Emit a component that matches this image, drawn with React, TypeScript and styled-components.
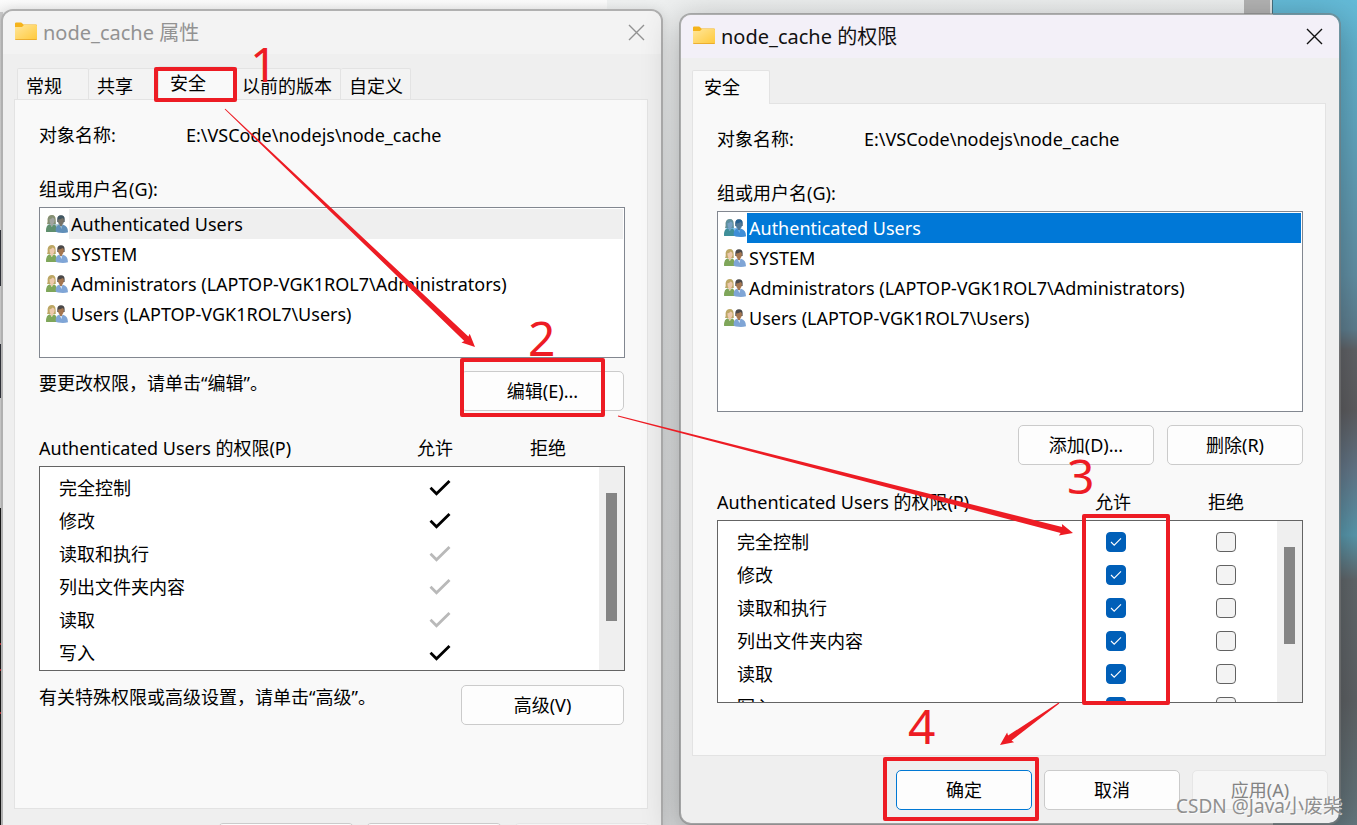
import React from "react";
import styled, { createGlobalStyle, css } from "styled-components";

const GlobalStyle = createGlobalStyle`
  * { box-sizing: border-box; }
  body {
    margin: 0;
    font-family: "Noto Sans", "Noto Sans CJK SC", sans-serif;
    font-size: 18px;
    line-height: 24px;
    color: #000;
  }
  button, input { font: inherit; color: inherit; margin: 0; }
`;

const Desktop = styled.main`
  position: relative;
  display: flex;
  align-items: flex-start;
  gap: 16px;
  height: 100vh;
  overflow: hidden;
  padding: 9px 16px 0 1px;
  background:
    linear-gradient(#fbfbfb, #f3f3f3) 0 0 / 607px 12px no-repeat,
    linear-gradient(to right, transparent 1244px, #b4b4b4 1244px, #b4b4b4 1270px, #e4e6e6 1270px, #e4e6e6 1272px, #46707f 1272px, #46707f 1273px, transparent 1273px) 0 0 / 100% 14px no-repeat,
    linear-gradient(#64bbd8 0, #62aac4 120px, #6291a6 275px, #5f7f90 330px, #626468 350px, #5e5e61 410px, #64788a 470px, #5a9bb0 535px, #62686c 580px, #5f6366 700px, #65787f 825px) 100% 0 / 84px 100% no-repeat,
    linear-gradient(#c9c9c9 0, #d8d8d8 230px, #30323a 230px, #30323a 286px, #cfcfcf 286px, #cfcfcf 344px, #30323a 344px, #30323a 398px, #cfcfcf 398px, #cfcfcf 508px, #181818 508px, #181818 643px, #b02a30 643px, #b02a30 645px, #181818 645px, #181818 669px, #b02a30 669px, #b02a30 671px, #181818 671px, #181818 712px, #b02a30 712px, #b02a30 714px, #181818 714px) 0 0 / 3px 100% no-repeat,
    linear-gradient(#eef0f0, #e0e2e3 250px, #d6d8d9);
`;

const Window = styled.section<{ $active?: boolean }>`
  position: relative;
  z-index: ${(p) => (p.$active ? 1 : 0)};
  flex: 1;
  min-width: 0;
  margin-top: ${(p) => (p.$active ? "4px" : "0")};
  border: 2px solid ${(p) => (p.$active ? "rgba(120, 120, 120, 0.55)" : "#b0b0b0")};
  border-radius: 12px;
  background: #efefef;
  background-clip: padding-box;
  box-shadow: ${(p) => (p.$active ? "0 8px 36px rgba(0, 0, 0, 0.3)" : "0 0 12px rgba(0, 0, 0, 0.12)")};
`;

const TitleBar = styled.header<{ $active?: boolean }>`
  display: flex;
  align-items: center;
  height: 43px;
  padding: 0 12px;
  border-radius: 10px 10px 0 0;
  background: ${(p) => (p.$active ? "#f3f0f8" : "#f3f3f3")};
  color: ${(p) => (p.$active ? "#111" : "#929292")};
`;

const Title = styled.h1`
  flex: 1;
  margin: 0 0 0 5px;
  font-size: 20px;
  font-weight: 400;
  line-height: 24px;
`;

const CloseButton = styled.button`
  display: flex;
  padding: 4px;
  border: 0;
  background: none;
`;

const TabList = styled.div<{ $single?: boolean }>`
  display: flex;
  align-items: flex-end;
  height: 45px;
  padding-left: ${(p) => (p.$single ? "11px" : "14px")};
`;

const selectedTab = css`
  position: relative;
  z-index: 1;
  height: 34px;
  margin-bottom: -1px;
  padding: 0 0 2px 11px;
  border-bottom: 0;
  background: #f9f9f9;
`;

const Tab = styled.button<{ $selected?: boolean; $width: number }>`
  width: ${(p) => p.$width}px;
  height: 31px;
  padding: 4px 0 0 8px;
  border: 1px solid #e3e3e3;
  border-bottom: 0;
  border-left-width: ${(p) => (p.$selected ? 1 : 0)}px;
  border-radius: 2px 2px 0 0;
  background: #f3f3f3;
  text-align: left;
  white-space: nowrap;
  &:first-child { border-left-width: 1px; }
  ${(p) => p.$selected && selectedTab}
`;

const Panel = styled.div<{ $height: number }>`
  display: flex;
  flex-direction: column;
  min-height: ${(p) => p.$height}px;
  margin: 0 13px 0 11px;
  padding: 23px 22px 0 24px;
  border: 1px solid #e3e3e3;
  background: #f9f9f9;
`;

const ObjectRow = styled.dl`
  display: grid;
  grid-template-columns: 147px 1fr;
  margin: 0 0 30px;
  dt, dd { margin: 0; }
`;

const Label = styled.div`
  margin-bottom: 6px;
`;

const UserList = styled.ul<{ $height: number }>`
  height: ${(p) => p.$height}px;
  margin: 0;
  padding: 1px;
  border: 1px solid #828790;
  background: #fff;
  list-style: none;
`;

const UserRow = styled.li`
  display: flex;
  align-items: center;
  height: 30px;
  padding-left: 5px;
`;

const UserName = styled.span<{ $tone?: "blue" | "grey" }>`
  flex: 1;
  margin-left: 1px;
  padding: 3px 2px;
  color: ${(p) => (p.$tone === "blue" ? "#fff" : "#000")};
  background: ${(p) => (p.$tone === "blue" ? "#0078d7" : p.$tone === "grey" ? "#efefef" : "transparent")};
`;

const ActionRow = styled.div`
  display: flex;
  justify-content: space-between;
  align-items: flex-start;
  padding: 13px 1px 0 0;
`;

const ButtonPair = styled.div`
  display: flex;
  justify-content: flex-end;
  gap: 13px;
  padding-top: 13px;
`;

const Button = styled.button<{ $wide?: boolean; $default?: boolean }>`
  width: ${(p) => (p.$wide ? 163 : 136)}px;
  height: 40px;
  padding: 0;
  border: 1px solid ${(p) => (p.$default ? "#0078d4" : "#cbcbcb")};
  border-radius: 5px;
  background: #fdfdfd;
  &:disabled {
    border-color: #e6e6e6;
    background: #f6f6f6;
    color: #838383;
  }
`;

const PermissionHeader = styled.div`
  display: grid;
  grid-template-columns: 1fr 108px 118px;
  padding: 25px 18px 6px 0;
  white-space: nowrap;
  span + span { text-align: center; }
`;

const PermissionBox = styled.div<{ $height: number }>`
  display: flex;
  height: ${(p) => p.$height}px;
  margin-bottom: 1px;
  overflow: hidden;
  border: 1px solid #646464;
  background: #fff;
`;

const PermissionTable = styled.table`
  flex: 1;
  height: max-content;
  margin-top: 4px;
  border-collapse: collapse;
  table-layout: fixed;
  th { padding: 0 0 0 19px; font-weight: 400; text-align: left; }
  td { padding: 0; text-align: center; }
  td:nth-child(2) { width: 116px; }
  td:nth-child(3) { width: 102px; }
  tr { height: 33px; }
  svg, input { display: block; margin: 0 auto; }
`;

const ScrollTrack = styled.div`
  width: 25px;
  padding: 26px 7px 0;
  background: #efefef;
`;

const ScrollThumb = styled.div<{ $height: number }>`
  height: ${(p) => p.$height}px;
  background: #858585;
`;

const CheckBox = styled.input`
  appearance: none;
  width: 20px;
  height: 20px;
  border: 1px solid #626262;
  border-radius: 4px;
  background: #f3f3f3;
  &:checked {
    border-color: #005fb8;
    background: #005fb8;
  }
`;

const CheckCell = styled.label`
  display: grid;
  justify-content: center;
  padding-right: 2px;
  > * { grid-area: 1 / 1; }
  svg { align-self: center; z-index: 1; pointer-events: none; }
`;

const Footer = styled.footer`
  display: flex;
  justify-content: flex-end;
  gap: 12px;
  padding: 14px 11px 13px;
`;

const Annotations = styled.svg`
  position: absolute;
  z-index: 2;
  top: 0;
  left: 0;
  width: 100%;
  pointer-events: none;
  fill: #ed1c24;
  font-size: 48px;
`;

const Watermark = styled.span`
  position: absolute;
  z-index: 3;
  right: 15px;
  bottom: 7px;
  font-size: 19px;
  color: #8f8f8f;
  text-shadow: 1px 1px 0 rgba(255, 255, 255, 0.7);
`;

const FolderIcon = () => (
  <svg width="23" height="22" viewBox="0 0 23 22" aria-hidden="true">
    <defs>
      <linearGradient id="folder" x1="0" y1="0" x2="1" y2="1">
        <stop offset="0" stopColor="#ffe69a" />
        <stop offset="1" stopColor="#ffc93a" />
      </linearGradient>
    </defs>
    <path d="M0 1.500Q0 .5 1.200 .5H6.200L8.500 2.500H21Q22 2.500 22 3.500V8H0Z" fill="#f5b31b" />
    <path d="M0 5H7L9 3.100H21Q22 3.100 22 4.100V17Q22 18 21 18H1Q0 18 0 17Z" fill="url(#folder)" />
    <path d="M0 17.200H22Q22 18 21 18H1Q0 18 0 17.200Z" fill="#e6a324" />
  </svg>
);

const CloseIcon = () => (
  <svg width="17" height="17" viewBox="0 0 17 17" fill="none" stroke="currentColor" strokeWidth="1.4" aria-hidden="true">
    <path d="M1 1 16 16M16 1 1 16" />
  </svg>
);

const UsersIcon = ({ tint }: { tint?: string }) => (
  <svg width="22" height="18" viewBox="0 0 22 18" aria-hidden="true">
    <path d="M1 9Q2 8 1.600 4Q2.200 0 6 0Q9.500 0 9.600 4.500L9.800 9Z" fill="#bda765" />
    <path d="M3.500 4Q5 4.600 6.500 2.500Q9 3 8.600 6Q8 8.600 7 9V11H4.500V9Q3.300 7.500 3.500 4Z" fill="#ecc9ad" />
    <path d="M0 16.500Q0 9.800 4 9.200L5.800 12L7.800 9.200Q11 10 11 17H1Q0 17 0 16.500Z" fill="#7fa65a" />
    <path d="M11.300 4Q11.300 0.300 15 0.200Q18.700 0.300 18.600 4V7H11.300Z" fill="#4a4848" />
    <path d="M12 4.400Q15 4.600 16.500 3Q18 3.400 18 5.500Q17.600 8.400 16.400 9.200V11H13.400V9.200Q12 8 12 4.400Z" fill="#a47650" />
    <path d="M9.600 16Q9.600 10.600 13 9.800L15 12L17 9.800Q22 11 22 17.200Q18 18.600 12 17.500Q9.600 17 9.600 16Z" fill="#7fa5d6" />
    <path d="M13.700 10.400 15 12 16.300 10.400 15.500 14Z" fill="#dfeaf6" />
    {tint && (
      <path
        d="M0 16.500Q0 10 3 9.300H1Q2 8 1.600 4Q2.200 0 6 0Q9.500 0 9.600 4.500L10 9.300 12.500 9Q11.300 7.500 11.300 4Q11.300.3 15 .2Q18.700.3 18.600 4Q18.500 8 17 9.800Q22 11 22 17.200Q18 18.600 12 17.500L11 17H1Q0 17 0 16.500Z"
        fill={tint}
      />
    )}
  </svg>
);

const GrantedIcon = ({ inherited }: { inherited?: boolean }) => (
  <svg width="24" height="18" viewBox="0 0 24 18" fill="none" stroke={inherited ? "#b9b9b9" : "#000"} strokeWidth="2.8" role="img" aria-label="允许">
    <path d="M3.500 8.800 9.500 14.800 22.500 2" />
  </svg>
);

const TickIcon = () => (
  <svg width="12" height="10" viewBox="0 0 12 10" fill="none" stroke="#fff" strokeWidth="1.100" aria-hidden="true">
    <path d="M1 5 4.200 8.200 11 1.400" />
  </svg>
);

const users = [
  "Authenticated Users",
  "SYSTEM",
  "Administrators (LAPTOP-VGK1ROL7\\Administrators)",
  "Users (LAPTOP-VGK1ROL7\\Users)",
];

const permissions = [
  { name: "完全控制", inherited: false },
  { name: "修改", inherited: false },
  { name: "读取和执行", inherited: true },
  { name: "列出文件夹内容", inherited: true },
  { name: "读取", inherited: true },
  { name: "写入", inherited: false },
];

const WindowTitle = ({ text, active }: { text: string; active?: boolean }) => (
  <TitleBar $active={active}>
    <FolderIcon />
    <Title>{text}</Title>
    <CloseButton type="button" aria-label="关闭">
      <CloseIcon />
    </CloseButton>
  </TitleBar>
);

const ObjectAndUsers = ({ height, tone }: { height: number; tone: "blue" | "grey" }) => (
  <>
    <ObjectRow>
      <dt>对象名称:</dt>
      <dd>E:\VSCode\nodejs\node_cache</dd>
    </ObjectRow>
    <Label>组或用户名(G):</Label>
    <UserList $height={height}>
      {users.map((user, i) => (
        <UserRow key={user}>
          <UsersIcon tint={i > 0 ? undefined : tone === "blue" ? "rgba(0,120,215,.5)" : "rgba(50,110,140,.4)"} />
          <UserName $tone={i === 0 ? tone : undefined}>{user}</UserName>
        </UserRow>
      ))}
    </UserList>
  </>
);

const Permissions = ({ height, thumb, editable }: { height: number; thumb: number; editable?: boolean }) => (
  <>
    <PermissionHeader>
      <span>Authenticated Users 的权限(P)</span>
      <span>允许</span>
      <span>拒绝</span>
    </PermissionHeader>
    <PermissionBox $height={height}>
      <PermissionTable aria-label="Authenticated Users 的权限">
        <tbody>
          {permissions.map(({ name, inherited }) => (
            <tr key={name}>
              <th scope="row">{name}</th>
              <td>
                {editable ? (
                  <CheckCell>
                    <CheckBox type="checkbox" defaultChecked aria-label={`${name} 允许`} />
                    <TickIcon />
                  </CheckCell>
                ) : (
                  <GrantedIcon inherited={inherited} />
                )}
              </td>
              <td>{editable && <CheckBox type="checkbox" aria-label={`${name} 拒绝`} />}</td>
            </tr>
          ))}
        </tbody>
      </PermissionTable>
      <ScrollTrack>
        <ScrollThumb $height={thumb} />
      </ScrollTrack>
    </PermissionBox>
  </>
);

const FooterButtons = ({ primary }: { primary?: boolean }) => (
  <Footer>
    <Button type="button" $default={primary}>确定</Button>
    <Button type="button">取消</Button>
    <Button type="button" disabled>应用(A)</Button>
  </Footer>
);

type Point = [number, number];

/* Tapered arrow: a hairline at the start that widens up to a barbed head. */
const Arrow = ({ from, to }: { from: Point; to: Point }) => {
  const length = Math.hypot(to[0] - from[0], to[1] - from[1]);
  const ux = (to[0] - from[0]) / length;
  const uy = (to[1] - from[1]) / length;
  const at = (along: number, side: number) =>
    `${to[0] - ux * along - uy * side},${to[1] - uy * along + ux * side}`;
  const points = [at(length, 0.5), at(12, 3), at(13, 6), at(0, 0), at(13, -6), at(12, -3), at(length, -0.5)];
  return <polygon points={points.join(" ")} />;
};

const Steps = () => (
  <Annotations viewBox="0 0 1357 825">
    <g fill="none" stroke="#ed1c24" strokeWidth="4" strokeLinejoin="round">
      <rect x="156" y="69" width="79" height="31" />
      <rect x="462" y="360" width="141" height="55" />
      <rect x="1084" y="516" width="84" height="187" />
      <rect x="885" y="759" width="152" height="60" />
    </g>
    <Arrow from={[225, 109]} to={[475, 347]} />
    <Arrow from={[618, 416]} to={[1073, 533]} />
    <Arrow from={[1059, 703]} to={[1000, 745]} />
    <text x="250" y="82">1</text>
    <text x="528" y="356">2</text>
    <text x="1067" y="494">3</text>
    <text x="908" y="744">4</text>
  </Annotations>
);

const App = () => (
  <>
    <GlobalStyle />
    <Desktop>
      <Window>
        <WindowTitle text="node_cache 属性" />
        <TabList role="tablist">
          <Tab type="button" role="tab" $width={72}>常规</Tab>
          <Tab type="button" role="tab" $width={69}>共享</Tab>
          <Tab type="button" role="tab" aria-selected $selected $width={76}>安全</Tab>
          <Tab type="button" role="tab" $width={107}>以前的版本</Tab>
          <Tab type="button" role="tab" $width={70}>自定义</Tab>
        </TabList>
        <Panel $height={710}>
          <ObjectAndUsers height={151} tone="grey" />
          <ActionRow>
            <span>要更改权限，请单击“编辑”。</span>
            <Button type="button" $wide>编辑(E)...</Button>
          </ActionRow>
          <Permissions height={205} thumb={128} />
          <ActionRow>
            <span>有关特殊权限或高级设置，请单击“高级”。</span>
            <Button type="button" $wide>高级(V)</Button>
          </ActionRow>
        </Panel>
        <FooterButtons />
      </Window>
      <Window $active>
        <WindowTitle text="node_cache 的权限" active />
        <TabList role="tablist" $single>
          <Tab type="button" role="tab" aria-selected $selected $width={78}>安全</Tab>
        </TabList>
        <Panel $height={653}>
          <ObjectAndUsers height={201} tone="blue" />
          <ButtonPair>
            <Button type="button">添加(D)...</Button>
            <Button type="button">删除(R)</Button>
          </ButtonPair>
          <Permissions height={183} thumb={97} editable />
        </Panel>
        <FooterButtons primary />
      </Window>
      <Steps />
      <Watermark>CSDN @Java小废柴</Watermark>
    </Desktop>
  </>
);

export default App;
